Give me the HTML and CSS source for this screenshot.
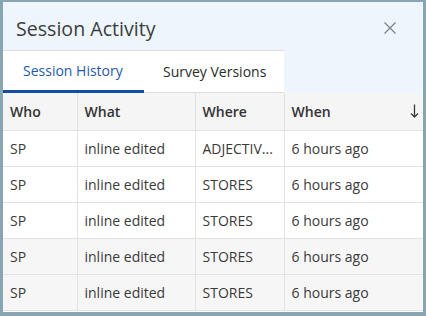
FILE: index.html
```html
<!DOCTYPE html>
<html>
<head>
<meta charset="utf-8">
<link rel="stylesheet" href="styles.css">
</head>
<body>
<div class="dialog">
  <div class="header">
    <span class="title">Session Activity</span>
    <span class="close" aria-label="Close">
      <svg width="14" height="14" viewBox="0 0 14 14"><path d="M1.5 1.5L12.5 12.5M12.5 1.5L1.5 12.5" stroke="#7c848c" stroke-width="1.3" fill="none"/></svg>
    </span>
  </div>
  <div class="tabbar">
    <div class="tabs">
      <div class="tab active">Session History</div>
      <div class="tab">Survey Versions</div>
    </div>
  </div>
  <table class="grid">
    <colgroup>
      <col class="c-who"><col class="c-what"><col class="c-where"><col class="c-when">
    </colgroup>
    <thead>
      <tr><th>Who</th><th>What</th><th>Where</th><th class="sort">When<svg class="arrow" width="9" height="14" viewBox="0 0 9 14"><path d="M4.5 0.5V13M1 9.5L4.5 13L8 9.5" stroke="#3a3a3a" stroke-width="1.3" fill="none"/></svg></th></tr>
    </thead>
    <tbody>
      <tr><td>SP</td><td>inline edited</td><td>ADJECTIV...</td><td>6 hours ago</td></tr>
      <tr><td>SP</td><td>inline edited</td><td>STORES</td><td>6 hours ago</td></tr>
      <tr><td>SP</td><td>inline edited</td><td>STORES</td><td>6 hours ago</td></tr>
      <tr class="alt"><td>SP</td><td>inline edited</td><td>STORES</td><td>6 hours ago</td></tr>
      <tr class="alt"><td>SP</td><td>inline edited</td><td>STORES</td><td>6 hours ago</td></tr>
    </tbody>
  </table>
</div>
</body>
</html>
```
FILE: styles.css
```css
html, body {
  margin: 0;
  padding: 0;
  background: #87a6b2;
}
body {
  padding: 2px 3px 4px 3px;
  font-family: "Open Sans", "Noto Sans", sans-serif;
  color: #333;
}
.dialog {
  width: 420px;
  height: 310px;
  background: #fff;
  overflow: hidden;
  display: flex;
  flex-direction: column;
}
.header {
  height: 48px;
  background: #eef5fc;
  display: flex;
  align-items: center;
  justify-content: space-between;
  padding: 2px 26px 0 13px;
  box-sizing: border-box;
  flex: none;
}
.title {
  font-size: 19.6px;
  color: #3b3d40;
  margin-top: 2px;
}
.close {
  display: flex;
  margin-top: 2px;
}
.tabbar {
  background: #eef5fc;
  height: 43px;
  flex: none;
}
.tabs {
  width: 281px;
  height: 100%;
  background: #fff;
  border-top: 1px solid #dcdfe2;
  box-sizing: border-box;
  display: flex;
}
.tab {
  width: 140px;
  box-sizing: border-box;
  display: flex;
  align-items: center;
  padding-left: 19px;
  font-size: 14px;
  color: #2b2b2b;
  border-bottom: 1px solid #dcdcdc;
}
.tab.active {
  width: 141px;
  padding-left: 20px;
  color: #1f5aa8;
  border-bottom: 3px solid #0f4ea3;
}
.grid {
  border-collapse: collapse;
  width: 420px;
  table-layout: fixed;
  font-size: 14px;
}
.c-who { width: 74px; }
.c-what { width: 118px; }
.c-where { width: 89px; }
.c-when { width: 139px; }
.grid th, .grid td {
  height: 36px;
  padding: 0 0 0 7px;
  text-align: left;
  border: 1px solid #e2e2e2;
  white-space: nowrap;
  overflow: hidden;
  box-sizing: border-box;
}
.grid tr > :first-child { border-left: none; }
.grid tr > :last-child { border-right: none; }
.grid th {
  background: #f5f5f5;
  font-weight: 600;
  color: #333;
  height: 37px;
  border-top: none;
}
.grid td {
  color: #3a3a3a;
}
.grid tr.alt td {
  background: #f6f6f6;
}
.sort {
  position: relative;
}
.arrow {
  position: absolute;
  right: 4px;
  top: 11px;
}
```
